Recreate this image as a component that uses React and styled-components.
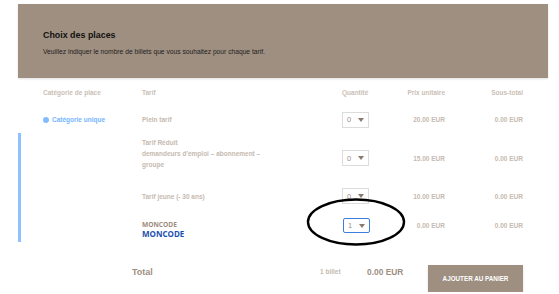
import React from 'react'
import styled, { createGlobalStyle } from 'styled-components'

const Global = createGlobalStyle`
  body {
    margin: 0;
    background: #fff;
    font-family: "Liberation Sans", Arial, sans-serif;
  }
`

const Page = styled.div`
  padding: 4px 11px 0 18px;
  width: 530px;
`

const Banner = styled.header`
  height: 74px;
  box-sizing: border-box;
  padding: 26px 0 0 25px;
  background: #9e8f81;
  box-shadow: 0 1px 2px rgba(0, 0, 0, 0.12);
`

const Title = styled.h2`
  margin: 0;
  font-size: 8.9px;
  line-height: 11px;
  font-weight: 700;
  color: #111;
`

const Subtitle = styled.p`
  margin: 6px 0 0;
  font-size: 6.7px;
  line-height: 10px;
  color: #1e1e1e;
`

const Row = styled.div`
  display: grid;
  grid-template-columns: 99px 200px 30px 73px 78px;
  align-items: center;
  height: ${p => p.$h}px;
  padding-left: 25px;
  font-size: 6.5px;
  font-weight: 700;
  color: #c6bab0;
`

const Group = styled.div`
  box-shadow: inset 3px 0 0 #8cc3ff;
`

const Head = styled.span`
  color: #cbc0b6;
  text-align: ${p => (p.$right ? 'right' : 'left')};
`

const Category = styled.span`
  display: flex;
  align-items: center;
  gap: 3px;
  color: #76b5ff;
  &::before {
    content: '';
    width: 6px;
    height: 6px;
    border-radius: 50%;
    background: #82bbff;
  }
`

const Tarif = styled.div`
  line-height: 11px;
  align-self: ${p => (p.$top ? 'start' : 'center')};
  padding-top: ${p => (p.$top ? '4px' : '0')};
`

const CodeBlock = styled.div`
  padding-top: 6px;
`

const Code = styled.div`
  font-family: "Open Sans", "Noto Sans", sans-serif;
  font-weight: 700;
  line-height: 9px;
  font-size: ${p => (p.$big ? '8px' : '6.6px')};
  color: ${p => (p.$big ? '#1d4fae' : '#9b8b7d')};
`

const QtyCell = styled.div`
  position: relative;
`

const Select = styled.div`
  display: flex;
  align-items: center;
  justify-content: space-between;
  box-sizing: border-box;
  width: 27px;
  height: ${p => (p.$active ? 15 : 16)}px;
  padding: 0 4px 0 4px;
  border: ${p => (p.$active ? '1.5px solid #3c7fe0' : '1px solid #dcdcdc')};
  border-radius: ${p => (p.$active ? '2px' : '0')};
  font-size: 7.5px;
  font-weight: 400;
  color: #9e8f81;
  margin-left: ${p => (p.$active ? '1px' : '0')};
`

const Arrow = styled.span`
  width: 0;
  height: 0;
  border-left: 3px solid transparent;
  border-right: 3px solid transparent;
  border-top: 4px solid #8a7a6c;
`

const Ring = styled.svg`
  position: absolute;
  left: -36px;
  top: -20px;
  pointer-events: none;
`

const Money = styled.span`
  text-align: right;
`

const Footer = styled.div`
  display: grid;
  grid-template-columns: 188px 47px 61px 95px;
  align-items: start;
  padding: 23px 0 0 114px;
`

const FooterText = styled.span`
  margin-top: 2px;
  line-height: 10px;
  font-weight: 700;
  font-size: ${p => p.$size}px;
  color: ${p => (p.$light ? '#c6bab0' : '#9e8f81')};
`

const CartButton = styled.button`
  height: 27px;
  border: 0;
  padding: 0;
  background: #9e8f81;
  box-shadow: 0 1px 2px rgba(0, 0, 0, 0.15);
  color: #fff;
  font-family: inherit;
  font-size: 6.3px;
  font-weight: 700;
`

const rows = [
  { h: 50, tarif: ['Tarif Réduit', "demandeurs d'emploi – abonnement –", 'groupe'], price: '15.00 EUR', top: true },
  { h: 26, tarif: ['Tarif jeune (- 30 ans)'], price: '10.00 EUR' },
]

const Qty = ({ value, active }) => (
  <Select $active={active}>
    <span>{value}</span>
    <Arrow />
  </Select>
)

const TarifRow = ({ r }) => (
  <Row $h={r.h}>
    <span />
    <Tarif $top={r.top}>
      {r.tarif.map(t => <div key={t}>{t}</div>)}
    </Tarif>
    <QtyCell><Qty value="0" /></QtyCell>
    <Money>{r.price}</Money>
    <Money>0.00 EUR</Money>
  </Row>
)

export default function App() {
  return (
    <Page>
      <Global />
      <Banner>
        <Title>Choix des places</Title>
        <Subtitle>Veuillez indiquer le nombre de billets que vous souhaitez pour chaque tarif.</Subtitle>
      </Banner>

      <Row $h={28}>
        <Head>Catégorie de place</Head>
        <Head>Tarif</Head>
        <Head>Quantité</Head>
        <Head $right>Prix unitaire</Head>
        <Head $right>Sous-total</Head>
      </Row>

      <Row $h={27}>
        <Category>Catégorie unique</Category>
        <Tarif>Plein tarif</Tarif>
        <QtyCell><Qty value="0" /></QtyCell>
        <Money>20.00 EUR</Money>
        <Money>0.00 EUR</Money>
      </Row>

      <Group>
        {rows.map(r => <TarifRow key={r.price} r={r} />)}
        <Row $h={33}>
          <span />
          <CodeBlock>
            <Code>MONCODE</Code>
            <Code $big>MONCODE</Code>
          </CodeBlock>
          <QtyCell>
            <Qty value="1" active />
            <Ring width="100" height="48" viewBox="0 0 100 48">
              <ellipse cx="50" cy="24" rx="48" ry="22.5" fill="none" stroke="#000" strokeWidth="2.4" />
            </Ring>
          </QtyCell>
          <Money>0.00 EUR</Money>
          <Money>0.00 EUR</Money>
        </Row>
      </Group>

      <Footer>
        <FooterText $size={9}>Total</FooterText>
        <FooterText $size={6.5} $light>1 billet</FooterText>
        <FooterText $size={8.4}>0.00 EUR</FooterText>
        <CartButton>AJOUTER AU PANIER</CartButton>
      </Footer>
    </Page>
  )
}
